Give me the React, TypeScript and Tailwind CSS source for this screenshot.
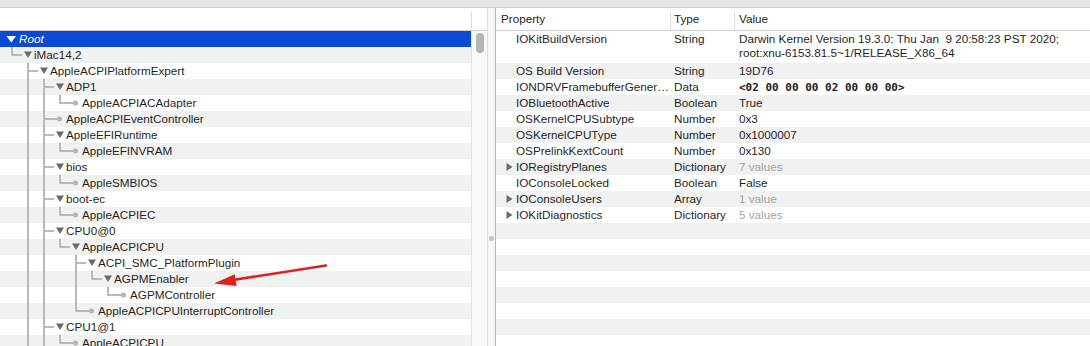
import React from 'react';

type TreeRow = { label: string; level: number; leaf?: boolean; last: boolean };

const tree: TreeRow[] = [
  { label: 'Root', level: 0, last: true },
  { label: 'iMac14,2', level: 1, last: true },
  { label: 'AppleACPIPlatformExpert', level: 2, last: false },
  { label: 'ADP1', level: 3, last: false },
  { label: 'AppleACPIACAdapter', level: 4, leaf: true, last: true },
  { label: 'AppleACPIEventController', level: 3, leaf: true, last: false },
  { label: 'AppleEFIRuntime', level: 3, last: false },
  { label: 'AppleEFINVRAM', level: 4, leaf: true, last: true },
  { label: 'bios', level: 3, last: false },
  { label: 'AppleSMBIOS', level: 4, leaf: true, last: true },
  { label: 'boot-ec', level: 3, last: false },
  { label: 'AppleACPIEC', level: 4, leaf: true, last: true },
  { label: 'CPU0@0', level: 3, last: false },
  { label: 'AppleACPICPU', level: 4, last: true },
  { label: 'ACPI_SMC_PlatformPlugin', level: 5, last: false },
  { label: 'AGPMEnabler', level: 6, last: true },
  { label: 'AGPMController', level: 7, leaf: true, last: true },
  { label: 'AppleACPICPUInterruptController', level: 5, leaf: true, last: true },
  { label: 'CPU1@1', level: 3, last: false },
  { label: 'AppleACPICPU', level: 4, leaf: true, last: true },
];

// x of the connector line for a node at level l
const lineX = (l: number) => 12 + 16 * (l - 1);

// which ancestor levels keep a vertical guide running through each row
const guides: number[][] = (() => {
  const lastAt: boolean[] = [];
  return tree.map((r) => {
    lastAt[r.level] = r.last;
    const g: number[] = [];
    for (let k = 1; k < r.level; k++) if (!lastAt[k]) g.push(k);
    return g;
  });
})();

const LINE = '#b9b9b9';

function TreeGlyph({ row, guide }: { row: TreeRow; guide: number[] }) {
  if (row.level === 0) {
    return (
      <svg width={19} height={16} className="shrink-0">
        <polygon points="6.5,5 16,5 11.25,11.5" fill="#ffffff" />
      </svg>
    );
  }
  const v = lineX(row.level);
  return (
    <svg width={v + 22} height={16} className="shrink-0">
      {guide.map((k) => (
        <rect key={k} x={lineX(k) - 1} y={0} width={2} height={16} fill={LINE} />
      ))}
      <rect x={v - 1} y={0} width={2} height={row.last ? 9 : 16} fill={LINE} />
      <rect x={v - 1} y={7} width={row.leaf ? 15 : 11} height={2} fill={LINE} />
      {row.leaf ? (
        <circle cx={v + 15.5} cy={8} r={2.5} fill="#b3b3b3" />
      ) : (
        <polygon points={`${v + 12},4.5 ${v + 20},4.5 ${v + 16},11`} fill="#6b6b6b" />
      )}
    </svg>
  );
}

type Prop = {
  name: string;
  type: string;
  value: string | string[];
  mono?: boolean;
  dim?: boolean;
  expandable?: boolean;
};

const props: Prop[] = [
  {
    name: 'IOKitBuildVersion',
    type: 'String',
    value: ['Darwin Kernel Version 19.3.0: Thu Jan  9 20:58:23 PST 2020;', 'root:xnu-6153.81.5~1/RELEASE_X86_64'],
  },
  { name: 'OS Build Version', type: 'String', value: '19D76' },
  { name: 'IONDRVFramebufferGener…', type: 'Data', value: '<02 00 00 00 02 00 00 00>', mono: true },
  { name: 'IOBluetoothActive', type: 'Boolean', value: 'True' },
  { name: 'OSKernelCPUSubtype', type: 'Number', value: '0x3' },
  { name: 'OSKernelCPUType', type: 'Number', value: '0x1000007' },
  { name: 'OSPrelinkKextCount', type: 'Number', value: '0x130' },
  { name: 'IORegistryPlanes', type: 'Dictionary', value: '7 values', dim: true, expandable: true },
  { name: 'IOConsoleLocked', type: 'Boolean', value: 'False' },
  { name: 'IOConsoleUsers', type: 'Array', value: '1 value', dim: true, expandable: true },
  { name: 'IOKitDiagnostics', type: 'Dictionary', value: '5 values', dim: true, expandable: true },
];

const stripe = (i: number) => (i % 2 === 1 ? 'bg-[#f0f1f1]' : 'bg-white');

export default function App() {
  return (
    <div
      className="relative w-[1090px] h-[346px] overflow-hidden bg-white text-[11.7px] text-[#1f1f1f] flex flex-col"
      style={{ fontFamily: '"Liberation Sans", Arial, sans-serif' }}
    >
      {/* window strip */}
      <div className="h-[8px] shrink-0 bg-[#e6e6e6] border-b border-[#cdcdcd]" />

      <div className="flex flex-1 min-h-0">
        {/* tree pane */}
        <div className="w-[488px] shrink-0 flex flex-col border-r border-[#dedede]">
          <div className="h-[23px] shrink-0 flex border-b border-[#cfcfcf]">
            <div className="w-[472px] flex items-center justify-end">
              <div className="w-px h-[17px] bg-[#dcdcdc]" />
            </div>
          </div>
          <div className="flex flex-1 min-h-0">
            <div className="w-[472px] flex flex-col">
              {tree.map((row, i) => (
                <div
                  key={i}
                  className={`h-[16px] shrink-0 flex items-center leading-[16px] whitespace-nowrap ${
                    i === 0 ? 'bg-[#0b4ad6] text-white italic' : stripe(i)
                  }`}
                >
                  <TreeGlyph row={row} guide={guides[i]} />
                  <span>{row.label}</span>
                </div>
              ))}
            </div>
            {/* scrollbar */}
            <div className="w-[16px] shrink-0 bg-[#f9f9f9] border-l border-[#e2e2e2] flex justify-center pt-[2px]">
              <div className="w-[8px] h-[20px] rounded-full bg-[#b5b5b5]" />
            </div>
          </div>
        </div>

        {/* splitter */}
        <div className="w-[8px] shrink-0 bg-[#f6f6f6] border-r border-[#b4b4b4] flex justify-center pt-[228px]">
          <div className="w-[5px] h-[5px] rounded-full bg-[#c4c4c4]" />
        </div>

        {/* property pane */}
        <div className="flex-1 flex flex-col min-w-0">
          <div className="h-[23px] shrink-0 flex border-b border-[#cfcfcf] text-[#262626]">
            <div className="w-[174px] pl-[5px] flex items-center">Property</div>
            <div className="w-px h-[17px] self-end bg-[#dcdcdc]" />
            <div className="w-[63px] pl-[3px] flex items-center">Type</div>
            <div className="w-px h-[17px] self-end bg-[#dcdcdc]" />
            <div className="flex-1 pl-[4px] flex items-center">Value</div>
          </div>
          {props.map((p, i) => {
            const tall = Array.isArray(p.value);
            return (
              <div
                key={p.name}
                className={`shrink-0 flex whitespace-nowrap ${tall ? 'h-[32px] pt-px leading-[14px]' : 'h-[16px] leading-[16px]'} ${stripe(i)}`}
              >
                <div className="w-[175px] shrink-0 flex items-start overflow-hidden">
                  <div className="w-[20px] shrink-0 flex justify-end pr-[3px]">
                    {p.expandable && (
                      <svg width={7} height={16} className="shrink-0">
                        <polygon points="0.5,4 6.5,8 0.5,12" fill="#6b6b6b" />
                      </svg>
                    )}
                  </div>
                  <span className="truncate pr-[2px]">{p.name}</span>
                </div>
                <div className="w-[64px] shrink-0 pl-[3px]">{p.type}</div>
                <div className={`flex-1 pl-[4px] ${p.dim ? 'text-[#a3a3a3]' : ''}`}>
                  {tall ? (
                    (p.value as string[]).map((l) => (
                      <div key={l} className="whitespace-pre">
                        {l}
                      </div>
                    ))
                  ) : p.mono ? (
                    <span
                      className="text-[11px] font-bold pt-px inline-block text-[#222]"
                      style={{ fontFamily: '"DejaVu Sans Mono", "Liberation Mono", monospace' }}
                    >
                      {p.value}
                    </span>
                  ) : (
                    p.value
                  )}
                </div>
              </div>
            );
          })}
          {Array.from({ length: 8 }).map((_, j) => (
            <div key={j} className={`h-[16px] shrink-0 ${stripe(props.length + j)}`} />
          ))}
        </div>
      </div>

      {/* red annotation arrow */}
      <svg className="absolute left-0 top-0 pointer-events-none" width={1090} height={346}>
        <line x1={326} y1={265.5} x2={236} y2={279.5} stroke="#e0201f" strokeWidth={2.5} strokeLinecap="round" />
        <polygon points="214,283.5 236.6,286 234.8,274.2" fill="#e0201f" />
      </svg>
    </div>
  );
}
